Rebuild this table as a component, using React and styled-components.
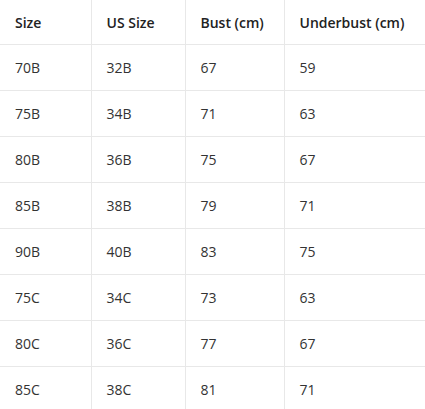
import React from 'react';
import styled, { createGlobalStyle } from 'styled-components';

const GlobalStyle = createGlobalStyle`
  html, body {
    margin: 0;
    padding: 0;
    background: #fff;
  }
  body {
    font-family: "Open Sans", "Noto Sans", "Liberation Sans", sans-serif;
  }
`;

const Table = styled.table`
  border-collapse: collapse;
  width: 425px;
  table-layout: fixed;
  color: #333;
  font-size: 14px;
`;

const Col = styled.col`
  width: ${p => p.w}px;
`;

const HeadCell = styled.th`
  height: 44px;
  padding: 0 0 0 15px;
  text-align: left;
  font-weight: 600;
  color: #222;
  border-right: 1px solid #e8e8e8;
  border-bottom: 1px solid #e8e8e8;
  white-space: nowrap;
`;

const Cell = styled.td`
  height: 45px;
  padding: 0 0 0 15px;
  border-right: 1px solid #e8e8e8;
  border-bottom: 1px solid #e8e8e8;
`;

const rows = [
  ['70B', '32B', '67', '59'],
  ['75B', '34B', '71', '63'],
  ['80B', '36B', '75', '67'],
  ['85B', '38B', '79', '71'],
  ['90B', '40B', '83', '75'],
  ['75C', '34C', '73', '63'],
  ['80C', '36C', '77', '67'],
  ['85C', '38C', '81', '71'],
];

export default function App() {
  return (
    <>
      <GlobalStyle />
      <Table>
        <colgroup>
          <Col w={91} />
          <Col w={94} />
          <Col w={99} />
          <Col w={141} />
        </colgroup>
        <thead>
          <tr>
            <HeadCell>Size</HeadCell>
            <HeadCell>US Size</HeadCell>
            <HeadCell>Bust (cm)</HeadCell>
            <HeadCell>Underbust (cm)</HeadCell>
          </tr>
        </thead>
        <tbody>
          {rows.map(r => (
            <tr key={r[0] + r[1]}>
              {r.map((v, i) => <Cell key={i}>{v}</Cell>)}
            </tr>
          ))}
        </tbody>
      </Table>
    </>
  );
}
